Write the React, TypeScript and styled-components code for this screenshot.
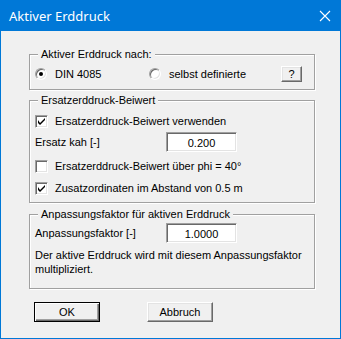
import React from "react";
import styled, { createGlobalStyle } from "styled-components";

const Global = createGlobalStyle`
  html, body { margin: 0; padding: 0; background: #f0f0f0; }
  * { box-sizing: border-box; }
`;

const Window = styled.div`
  width: 341px;
  height: 339px;
  display: flex;
  flex-direction: column;
  background: #f0f0f0;
  border: 1px solid #0078d7;
  border-top: none;
  font-family: "Liberation Sans", Arial, sans-serif;
  font-size: 11px;
  color: #000;
`;

const TitleBar = styled.div`
  height: 31px;
  margin: 0 -1px;
  background: #0078d7;
  display: flex;
  align-items: center;
  justify-content: space-between;
  padding: 0 10px 0 9px;
  color: #fff;
  font-family: "Noto Sans", "Open Sans", sans-serif;
  font-size: 13px;
  flex-shrink: 0;
`;

const Close = styled.div`
  width: 12px;
  height: 12px;
  display: flex;
`;

const Body = styled.div`
  display: flex;
  flex-direction: column;
  padding: 23px 25px 0 28px;
`;

const Group = styled.div<{ $h: number; $mt?: number; $pt: number }>`
  position: relative;
  height: ${(p) => p.$h}px;
  margin-top: ${(p) => p.$mt ?? 0}px;
  border: 1px solid #a0a0a0;
  box-shadow: 1px 1px 0 #fff, inset 1px 1px 0 #fff;
  padding: ${(p) => p.$pt}px 5px 0 5px;
  display: flex;
  flex-direction: column;
`;

const Legend = styled.span`
  position: absolute;
  top: -7px;
  left: 8px;
  padding: 0 3px;
  background: #f0f0f0;
  line-height: 13px;
`;

const Row = styled.div<{ $h?: number; $mt?: number }>`
  display: flex;
  align-items: center;
  height: ${(p) => p.$h ?? 16}px;
  margin-top: ${(p) => p.$mt ?? 0}px;
`;

const Label = styled.span<{ $w?: number }>`
  white-space: nowrap;
  ${(p) => (p.$w ? `width: ${p.$w}px;` : "")}
`;

const RadioCircle = styled.span<{ $on?: boolean }>`
  width: 12px;
  height: 12px;
  border-radius: 50%;
  background: #fff;
  border: 1px solid;
  border-color: #a0a0a0 #fff #fff #a0a0a0;
  box-shadow: inset 1px 1px 0 #696969, inset -1px -1px 0 #e3e3e3;
  display: flex;
  align-items: center;
  justify-content: center;
  margin-right: 8px;
  flex-shrink: 0;
  &::after {
    content: "";
    display: ${(p) => (p.$on ? "block" : "none")};
    width: 4px;
    height: 4px;
    border-radius: 50%;
    background: #000;
  }
`;

const CheckBox = styled.span`
  width: 13px;
  height: 13px;
  background: #fff;
  border: 1px solid;
  border-color: #a0a0a0 #fff #fff #a0a0a0;
  box-shadow: inset 1px 1px 0 #696969, inset -1px -1px 0 #e3e3e3;
  display: flex;
  align-items: center;
  justify-content: center;
  margin-right: 7px;
  flex-shrink: 0;
`;

const Input = styled.div`
  width: 71px;
  height: 20px;
  background: #fff;
  border: 1px solid;
  border-color: #a0a0a0 #fff #fff #a0a0a0;
  box-shadow: inset 1px 1px 0 #696969, inset -1px -1px 0 #e3e3e3;
  display: flex;
  align-items: center;
  justify-content: center;
  padding-top: 1px;
`;

const Button = styled.div<{ $w: number; $h: number; $def?: boolean }>`
  width: ${(p) => p.$w}px;
  height: ${(p) => p.$h}px;
  background: #f0f0f0;
  border: 1px solid;
  border-color: ${(p) => (p.$def ? "#000" : "#fff #696969 #696969 #fff")};
  box-shadow: ${(p) =>
    p.$def
      ? "inset 1px 1px 0 #fff, inset -1px -1px 0 #696969, inset -2px -2px 0 #a0a0a0"
      : "inset -1px -1px 0 #a0a0a0, inset 1px 1px 0 #e3e3e3"};
  display: flex;
  align-items: center;
  justify-content: center;
  flex-shrink: 0;
`;

const Para = styled.div`
  margin-top: 5px;
  line-height: 14px;
`;

const ButtonRow = styled.div`
  display: flex;
  gap: 47px;
  margin-top: 13px;
  padding-left: 5px;
`;

const Check = () => (
  <svg width="7" height="7" viewBox="0 0 7 7">
    <path d="M0 2 L0 5 L2 7 L7 2 L7 0 L2 5 Z" fill="#000" />
  </svg>
);

export default function App() {
  return (
    <>
      <Global />
      <Window>
        <TitleBar>
          <span>Aktiver Erddruck</span>
          <Close>
            <svg width="12" height="12" viewBox="0 0 12 12">
              <path d="M1 1 L11 11 M11 1 L1 11" stroke="#fff" strokeWidth="1.1" />
            </svg>
          </Close>
        </TitleBar>
        <Body>
          <Group $h={36} $pt={11}>
            <Legend>Aktiver Erddruck nach:</Legend>
            <Row>
              <RadioCircle $on />
              <Label $w={94}>DIN 4085</Label>
              <RadioCircle />
              <Label $w={112}>selbst definierte</Label>
              <Button $w={21} $h={16}>?</Button>
            </Row>
          </Group>
          <Group $h={103} $mt={10} $pt={12}>
            <Legend>Ersatzerddruck-Beiwert</Legend>
            <Row>
              <CheckBox>
                <Check />
              </CheckBox>
              <Label>Ersatzerddruck-Beiwert verwenden</Label>
            </Row>
            <Row $h={20} $mt={3}>
              <Label $w={131}>Ersatz kah [-]</Label>
              <Input>0.200</Input>
            </Row>
            <Row $mt={6}>
              <CheckBox />
              <Label>Ersatzerddruck-Beiwert über phi = 40°</Label>
            </Row>
            <Row $mt={6}>
              <CheckBox>
                <Check />
              </CheckBox>
              <Label>Zusatzordinaten im Abstand von 0.5 m</Label>
            </Row>
          </Group>
          <Group $h={75} $mt={11} $pt={8}>
            <Legend>Anpassungsfaktor für aktiven Erddruck</Legend>
            <Row $h={20}>
              <Label $w={131}>Anpassungsfaktor [-]</Label>
              <Input>1.0000</Input>
            </Row>
            <Para>
              Der aktive Erddruck wird mit diesem Anpassungsfaktor
              <br />
              multipliziert.
            </Para>
          </Group>
          <ButtonRow>
            <Button $w={66} $h={20} $def>
              OK
            </Button>
            <Button $w={66} $h={20}>
              Abbruch
            </Button>
          </ButtonRow>
        </Body>
      </Window>
    </>
  );
}
